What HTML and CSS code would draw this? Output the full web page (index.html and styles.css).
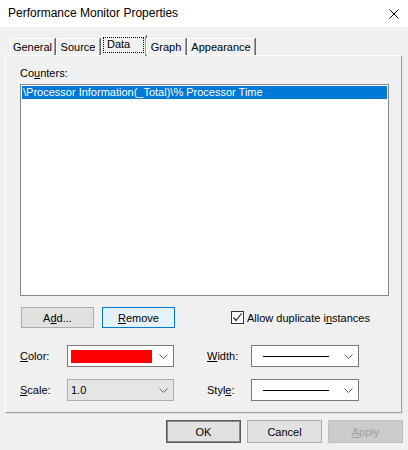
FILE: index.html
```html
<!DOCTYPE html>
<html>
<head>
<meta charset="utf-8">
<title>Performance Monitor Properties</title>
<link rel="stylesheet" href="styles.css">
</head>
<body>
<div class="titlebar">
  <span class="title">Performance Monitor Properties</span>
  <svg class="close" width="10" height="10" viewBox="0 0 10 10"><path d="M0.5 0.5 L9.5 9.5 M9.5 0.5 L0.5 9.5" stroke="#000" stroke-width="1" fill="none"/></svg>
</div>
<div class="dialog">
  <div class="tabs">
    <div class="tab tab-general">General</div>
    <div class="tab tab-source">Source</div>
    <div class="tab tab-data selected"><span class="focus">Data</span></div>
    <div class="tab tab-graph">Graph</div>
    <div class="tab tab-appearance">Appearance</div>
  </div>
  <div class="panel">
    <div class="label counters-label">Co<u>u</u>nters:</div>
    <div class="listbox">
      <div class="row selected-row">\Processor Information(_Total)\% Processor Time</div>
    </div>
    <div class="buttons-row">
      <button class="btn small">A<u>d</u>d...</button>
      <button class="btn small focused"><u>R</u>emove</button>
      <label class="check">
        <span class="box"><svg width="11" height="11" viewBox="0 0 11 11"><path d="M1.5 5.5 L4 8.5 L9.5 1.5" stroke="#222" stroke-width="1.2" fill="none"/></svg></span>
        <span>Allow duplicate i<u>n</u>stances</span>
      </label>
    </div>
    <div class="field-row first">
      <span class="flabel left"><u>C</u>olor:</span>
      <div class="combo left-combo">
        <span class="swatch"></span>
        <svg class="chev" width="9" height="5" viewBox="0 0 9 5"><path d="M0.5 0.5 L4.5 4.5 L8.5 0.5" stroke="#606060" fill="none"/></svg>
      </div>
      <span class="flabel right"><u>W</u>idth:</span>
      <div class="combo right-combo">
        <span class="line"></span>
        <svg class="chev" width="9" height="5" viewBox="0 0 9 5"><path d="M0.5 0.5 L4.5 4.5 L8.5 0.5" stroke="#606060" fill="none"/></svg>
      </div>
    </div>
    <div class="field-row second">
      <span class="flabel left"><u>S</u>cale:</span>
      <div class="combo left-combo disabled">
        <span class="value">1.0</span>
        <svg class="chev" width="9" height="5" viewBox="0 0 9 5"><path d="M0.5 0.5 L4.5 4.5 L8.5 0.5" stroke="#606060" fill="none"/></svg>
      </div>
      <span class="flabel right">Styl<u>e</u>:</span>
      <div class="combo right-combo">
        <span class="line"></span>
        <svg class="chev" width="9" height="5" viewBox="0 0 9 5"><path d="M0.5 0.5 L4.5 4.5 L8.5 0.5" stroke="#606060" fill="none"/></svg>
      </div>
    </div>
  </div>
  <div class="footer">
    <button class="btn big default">OK</button>
    <button class="btn big">Cancel</button>
    <button class="btn big disabled-btn"><u>A</u>pply</button>
  </div>
</div>
</body>
</html>
```
FILE: styles.css
```css
* { box-sizing: border-box; }
html, body { margin: 0; padding: 0; }
body {
  width: 408px;
  height: 450px;
  overflow: hidden;
  background: #f0f0f0;
  font-family: "Liberation Sans", Arial, sans-serif;
  font-size: 11px;
  color: #000;
}
u { text-underline-offset: 1px; }

.titlebar {
  height: 27px;
  background: #fff;
  display: flex;
  align-items: center;
  justify-content: space-between;
  padding: 0 9px 2px 8px;
}
.title { font-size: 12px; }
.close { display: block; margin-top: 2px; }

.dialog { padding: 8px 5px 0 5px; }

.tabs {
  display: flex;
  align-items: flex-end;
  height: 21px;
  margin-left: 5px;
  margin-bottom: -1px;
  position: relative;
  z-index: 1;
}
.tab {
  height: 17px;
  margin-bottom: 1px;
  border-top: 1px solid #fff;
  border-left: 1px solid #fff;
  border-right: 1px solid #a0a0a0;
  box-shadow: 1px 0 0 #696969;
  text-align: center;
  line-height: 16px;
  background: #f0f0f0;
}
.tab-general { width: 45px; margin-right: 1px; }
.tab-source { width: 44px; margin-right: 1px; }
.tab-data { width: 45px; }
.tab-graph { width: 40px; margin-right: 1px; }
.tab-appearance { width: 68px; }
.tab.selected {
  height: 21px;
  margin-bottom: 0;
  padding: 1px 1px 0 1px;
}
.focus {
  display: block;
  height: 16px;
  border: 1px dotted #000;
  line-height: 13px;
  text-align: left;
  padding-left: 3px;
}

.panel {
  height: 358px;
  width: 397px;
  border-top: 1px solid #fff;
  border-left: 1px solid #fff;
  border-right: 1px solid #a0a0a0;
  border-bottom: 1px solid #a0a0a0;
  box-shadow: 1px 1px 0 #e3e3e3;
  padding: 10px 0 0 14px;
}
.counters-label { line-height: 15px; height: 15px; }

.listbox {
  margin-top: 3px;
  width: 369px;
  height: 212px;
  background: #fff;
  border: 1px solid #828790;
  padding: 1px;
}
.row {
  height: 13px;
  line-height: 13px;
  padding-left: 1px;
  white-space: nowrap;
}
.selected-row { background: #0078d7; color: #fff; }

.btn {
  font-family: "Liberation Sans", Arial, sans-serif;
  font-size: 11px;
  color: #000;
  background: #e1e1e1;
  border: 1px solid #adadad;
  padding: 0;
  margin: 0;
}
.buttons-row {
  display: flex;
  align-items: center;
  margin-top: 11px;
  margin-left: 1px;
  height: 21px;
}
.btn.small { width: 73px; height: 21px; margin-right: 8px; }
.btn.focused { background: #e5f1fb; border-color: #0078d7; }
.check {
  display: flex;
  align-items: center;
  margin-left: 48px;
  gap: 3px;
}
.box {
  width: 13px;
  height: 13px;
  border: 1px solid #333;
  background: #fff;
  display: block;
}
.box svg { display: block; }

.field-row {
  display: flex;
  align-items: center;
  height: 22px;
}
.field-row.first { margin-top: 17px; }
.field-row.second { margin-top: 12px; }
.flabel.left { width: 47px; }
.flabel.right { width: 44px; margin-left: 33px; }
.combo {
  height: 22px;
  background: #fff;
  border: 1px solid #7a7a7a;
  display: flex;
  align-items: center;
  position: relative;
}
.left-combo { width: 107px; padding-left: 3px; }
.right-combo { width: 108px; padding-left: 11px; }
.combo.disabled { background: #e5e5e5; border-color: #adadad; }
.swatch { width: 81px; height: 13px; background: #ff0000; display: block; }
.line { width: 66px; height: 1px; background: #000; display: block; }
.value { padding-left: 0; }
.chev { margin-left: auto; margin-right: 5px; display: block; }

.footer {
  display: flex;
  justify-content: flex-end;
  gap: 6px;
  margin-top: 7px;
}
.btn.big { width: 75px; height: 23px; }
.btn.default { border: 1px solid #5a5a5a; box-shadow: inset 0 0 0 1px #8a8a8a; }
.btn.disabled-btn { background: #cccccc; border-color: #bfbfbf; color: #a0a0a0; }
```
